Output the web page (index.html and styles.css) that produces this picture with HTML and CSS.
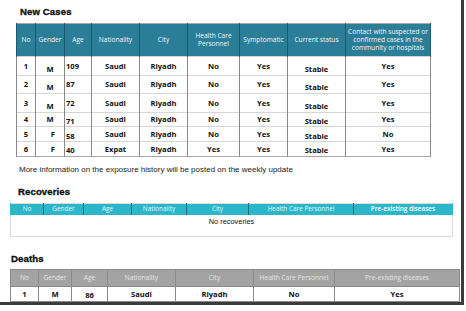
FILE: index.html
```html
<!DOCTYPE html>
<html>
<head>
<meta charset="utf-8">
<link rel="stylesheet" href="styles.css">
</head>
<body>
<div class="frame">
  <div class="title t-new">New Cases</div>
  <table class="tbl cases">
    <colgroup>
      <col style="width:19px"><col style="width:29px"><col style="width:27px"><col style="width:48px"><col style="width:48px"><col style="width:52px"><col style="width:48px"><col style="width:58px"><col style="width:85px">
    </colgroup>
    <thead>
      <tr><th>No</th><th>Gender</th><th>Age</th><th>Nationality</th><th>City</th><th>Health Care Personnel</th><th>Symptomatic</th><th>Current status</th><th class="contact">Contact with suspected or confirmed cases in the community or hospitals</th></tr>
    </thead>
    <tbody>
      <tr class="r-tall"><td>1</td><td class="low">M</td><td class="age">109</td><td>Saudi</td><td>Riyadh</td><td>No</td><td>Yes</td><td class="low">Stable</td><td>Yes</td></tr>
      <tr class="r-tall"><td>2</td><td class="low">M</td><td class="age">87</td><td>Saudi</td><td>Riyadh</td><td>No</td><td>Yes</td><td class="low">Stable</td><td>Yes</td></tr>
      <tr class="r-tall"><td>3</td><td class="low">M</td><td class="age">72</td><td>Saudi</td><td>Riyadh</td><td>No</td><td>Yes</td><td class="low">Stable</td><td>Yes</td></tr>
      <tr class="r-short"><td>4</td><td>M</td><td class="age low1">71</td><td>Saudi</td><td>Riyadh</td><td>No</td><td>Yes</td><td class="low1">Stable</td><td>Yes</td></tr>
      <tr class="r-short"><td>5</td><td class="fem">F</td><td class="age low1">58</td><td>Saudi</td><td>Riyadh</td><td>No</td><td>Yes</td><td class="low1">Stable</td><td>No</td></tr>
      <tr class="r-short"><td>6</td><td class="fem">F</td><td class="age low1">40</td><td>Expat</td><td>Riyadh</td><td>Yes</td><td>Yes</td><td class="low1">Stable</td><td>Yes</td></tr>
    </tbody>
  </table>
  <p class="note">More information on the exposure history will be posted on the weekly update</p>

  <div class="title t-rec">Recoveries</div>
  <table class="tbl rec">
    <colgroup>
      <col style="width:33px"><col style="width:40px"><col style="width:48px"><col style="width:55px"><col style="width:62px"><col style="width:105px"><col style="width:99px">
    </colgroup>
    <thead>
      <tr><th>No</th><th>Gender</th><th>Age</th><th>Nationality</th><th>City</th><th>Health Care Personnel</th><th class="strong">Pre-existing diseases</th></tr>
    </thead>
    <tbody>
      <tr><td colspan="7">No recoveries</td></tr>
    </tbody>
  </table>

  <div class="title t-deaths">Deaths</div>
  <table class="tbl deaths">
    <colgroup>
      <col style="width:28px"><col style="width:33px"><col style="width:36px"><col style="width:68px"><col style="width:78px"><col style="width:81px"><col style="width:125px">
    </colgroup>
    <thead>
      <tr><th>No</th><th>Gender</th><th>Age</th><th>Nationality</th><th>City</th><th>Health Care Personnel</th><th>Pre-existing diseases</th></tr>
    </thead>
    <tbody>
      <tr><td>1</td><td>M</td><td class="low1">86</td><td>Saudi</td><td>Riyadh</td><td>No</td><td>Yes</td></tr>
    </tbody>
  </table>
</div>
</body>
</html>
```

FILE: styles.css
```css
html, body {
  margin: 0;
  padding: 0;
  background: #ffffff;
}

.frame {
  box-sizing: border-box;
  width: 464px;
  height: 305px;
  padding-top: 6px;
  border-right: 3px solid #3b3b3b;
  border-bottom: 3px solid #3b3b3b;
  background: #ffffff;
  font-family: "Open Sans", "Liberation Sans", sans-serif;
  color: #111;
}

.title {
  font-family: "Liberation Sans", Arial, sans-serif;
  font-weight: 700;
  font-size: 9.6px;
  line-height: 12px;
  height: 12px;
  color: #111;
  letter-spacing: 0.1px;
  -webkit-text-stroke: 0.35px #111;
}

.t-new { margin-left: 20px; margin-bottom: 5px; }
.t-rec { margin-left: 18px; margin-top: 11px; margin-bottom: 5px; }
.t-deaths { margin-left: 11px; margin-top: 16px; margin-bottom: 4px; }

.tbl {
  border-collapse: collapse;
  table-layout: fixed;
}

.tbl th {
  font-weight: 400;
  font-size: 6.6px;
  line-height: 8px;
  color: #f2f6f8;
  text-align: center;
  padding: 0 1px;
}

.tbl td {
  font-weight: 700;
  font-size: 7.6px;
  text-align: center;
  padding: 0;
  vertical-align: middle;
}

/* New cases table */
.cases {
  margin-left: 16px;
  width: 414px;
  border: 1px solid #a9a9a9;
}
.cases thead tr { height: 33px; }
.cases th {
  background: #2b7e97;
  border-left: 1px solid #1d5a6b;
  border-right: 1px solid #1d5a6b;
}
.cases th.contact { padding: 0 2px; }
.cases td {
  border-left: 1px solid #8a8a8a;
  border-right: 1px solid #8a8a8a;
  border-top: 1px solid #d6d6d6;
}
.cases tr.r-tall { height: 18.5px; }
.cases tr.r-short { height: 14.7px; }
.cases td.low { padding-top: 7px; line-height: 9px; }
.cases td.low1 { padding-top: 3px; }
.cases td.age { text-align: left; padding-left: 1px; }
.cases td.fem { text-align: right; padding-right: 9px; }

.note {
  margin: 8px 0 0 19px;
  font-family: "Liberation Sans", Arial, sans-serif;
  font-size: 8px;
  line-height: 10px;
  color: #222;
}

/* Recoveries table */
.rec {
  margin-left: 10px;
  width: 442px;
  border: 1px solid #dcdcdc;
}
.rec thead tr { height: 12px; }
.rec th {
  background: #2bb7c9;
  color: #e8f7fa;
  border-left: 1px solid #1c6f7a;
  border-right: 1px solid #1c6f7a;
  font-size: 6.4px;
}
.rec th:first-child { border-left-color: #2bb7c9; }
.rec th:last-child { border-right-color: #2bb7c9; }
.rec th.strong { color: #ffffff; font-weight: 600; }
.rec tbody tr { height: 21px; }
.rec td {
  font-weight: 400;
  font-family: "Liberation Sans", Arial, sans-serif;
  font-size: 7.4px;
  color: #111;
  vertical-align: top;
  padding-top: 2px;
}

/* Deaths table */
.deaths {
  margin-left: 10px;
  width: 449px;
  border: 1px solid #8a8a8a;
}
.deaths thead tr { height: 17px; }
.deaths th {
  background: #a3a3a3;
  color: #e4e4e4;
  border: 1px solid #8a8a8a;
}
.deaths tbody tr { height: 15px; }
.deaths td {
  border: 1px solid #8a8a8a;
}
.deaths td.low1 { padding-top: 2px; }
```
